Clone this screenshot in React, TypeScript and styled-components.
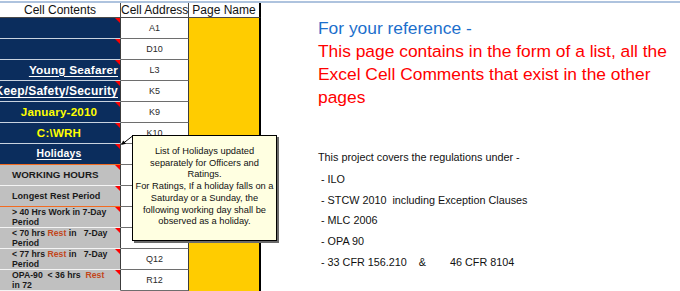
import React from 'react'
import styled, { createGlobalStyle } from 'styled-components'

type Tone = 'white' | 'yellow' | 'dark'
type Rule = 'light' | 'white' | 'orange'

type ContentRow = {
  fill: 'navy' | 'gray'
  rule: Rule
  text?: React.ReactNode
  tone?: Tone
  link?: boolean
  align?: 'left' | 'center' | 'right'
  size?: number
  twoLine?: boolean
}

const GlobalStyle = createGlobalStyle`
  html, body {
    margin: 0;
    padding: 0;
    background: #fff;
  }
  body {
    font-family: "Liberation Sans", Arial, sans-serif;
    width: 680px;
    height: 291px;
    overflow: hidden;
  }
`

const Page = styled.div`
  width: 680px;
  height: 291px;
  overflow: hidden;
  padding-top: 1px;
  box-sizing: border-box;
`

const TopRule = styled.div`
  height: 2px;
  background: #aec3de;
`

const Main = styled.div`
  position: relative;
  display: flex;
`

const Sheet = styled.div`
  display: grid;
  grid-template-columns: 121px 68px 72px;
  grid-auto-rows: 21px;
  grid-template-rows: 15px;
  width: 261px;
  flex: none;
`

const HeadCell = styled.div<{ $last?: boolean }>`
  box-sizing: border-box;
  border-bottom: 1px solid #4a4a4a;
  border-right: ${(p) => (p.$last ? '2px solid #000' : '1px solid #4a4a4a')};
  font-size: 12px;
  line-height: 14px;
  color: #111;
  text-align: center;
  white-space: nowrap;
  overflow: hidden;
`

const ContentCell = styled.div<{
  $fill: 'navy' | 'gray'
  $rule: Rule
  $tone: Tone
  $align: 'left' | 'center' | 'right'
  $size: number
  $twoLine?: boolean
}>`
  position: relative;
  box-sizing: border-box;
  background: ${(p) => (p.$fill === 'navy' ? '#0b2d5d' : '#c0c0c0')};
  border-right: 1px solid #3c3c3c;
  border-bottom: 1px solid
    ${(p) => (p.$rule === 'orange' ? '#f26b21' : p.$rule === 'white' ? '#f4f4f4' : '#c9d3df')};
  color: ${(p) => (p.$tone === 'yellow' ? '#ffff00' : p.$tone === 'white' ? '#fff' : '#1a1a1a')};
  font-weight: 700;
  font-size: ${(p) => p.$size}px;
  letter-spacing: ${(p) => (p.$fill === 'navy' ? '0.2px' : '0')};
  line-height: ${(p) => (p.$twoLine ? '10px' : '20px')};
  padding: ${(p) => (p.$twoLine ? '0 0 0 12px' : p.$align === 'left' ? '0 0 0 12px' : '0 2px 0 0')};
  text-align: ${(p) => p.$align};
  white-space: pre;
  overflow: hidden;
  display: flex;
  flex-direction: column;
  justify-content: center;
  align-items: ${(p) => (p.$align === 'right' ? 'flex-end' : p.$align === 'center' ? 'center' : 'flex-start')};

  &::after {
    content: '';
    position: absolute;
    top: 0;
    right: 0;
    border-top: 5px solid #ff0000;
    border-left: 5px solid transparent;
  }
`

const Link = styled.span`
  text-decoration: underline;
  text-underline-offset: 2px;
`

const Rest = styled.span`
  color: #c2461a;
`

const AddressCell = styled.div`
  box-sizing: border-box;
  background: #fff;
  border-right: 1px solid #3c3c3c;
  border-bottom: 1px solid #6e6e6e;
  font-size: 9px;
  line-height: 20px;
  color: #2a2a2a;
  text-align: center;
`

const PageNameCell = styled.div`
  box-sizing: border-box;
  background: #ffcc00;
  border-right: 2px solid #000;
`

const Notes = styled.div`
  padding: 14px 0 0 57px;
  flex: 1;
`

const Lead = styled.div<{ $tone: 'blue' | 'red' }>`
  font-size: 17.4px;
  line-height: 23px;
  color: ${(p) => (p.$tone === 'blue' ? '#1c6fcc' : '#ff0000')};
  white-space: nowrap;
`

const Scope = styled.div`
  margin-top: 37px;
  font-size: 10.8px;
  color: #111;
`

const ScopeIntro = styled.div`
  line-height: 23px;
`

const ScopeItem = styled.div`
  line-height: 20.7px;
  white-space: pre;
`

const Comment = styled.div`
  position: absolute;
  left: 132px;
  top: 132px;
  width: 145px;
  height: 106px;
  box-sizing: border-box;
  background: #ffffe1;
  border: 1px solid #000;
  box-shadow: 2px 2px 0 #6a6a6a;
  padding-top: 10px;
  font-size: 9.3px;
  line-height: 11.7px;
  color: #111;
  text-align: center;
  white-space: nowrap;
`

const Pointer = styled.svg`
  position: absolute;
  left: 118px;
  top: 130px;
`

const rows: ContentRow[] = [
  { fill: 'navy', rule: 'light' },
  { fill: 'navy', rule: 'light' },
  { fill: 'navy', rule: 'light', text: 'Young Seafarer', tone: 'white', link: true, align: 'right', size: 11.8 },
  { fill: 'navy', rule: 'light', text: 'Keep/Safety/Security', tone: 'white', link: true, align: 'right', size: 12 },
  { fill: 'navy', rule: 'light', text: 'January-2010', tone: 'yellow', align: 'center', size: 11.6 },
  { fill: 'navy', rule: 'light', text: 'C:\\WRH', tone: 'yellow', align: 'center', size: 11.6 },
  { fill: 'navy', rule: 'orange', text: 'Holidays', tone: 'white', link: true, align: 'center', size: 10.4 },
  { fill: 'gray', rule: 'white', text: 'WORKING HOURS', align: 'left', size: 9.8 },
  { fill: 'gray', rule: 'orange', text: 'Longest Rest Period', align: 'left', size: 9.1 },
  {
    fill: 'gray',
    rule: 'white',
    twoLine: true,
    size: 8.7,
    text: (
      <>
        <span>{'> 40 Hrs Work in 7-Day'}</span>
        <span>Period</span>
      </>
    ),
  },
  {
    fill: 'gray',
    rule: 'white',
    twoLine: true,
    size: 8.7,
    text: (
      <>
        <span>
          {'< 70 hrs '}
          <Rest>Rest</Rest>
          {' in   7-Day'}
        </span>
        <span>Period</span>
      </>
    ),
  },
  {
    fill: 'gray',
    rule: 'white',
    twoLine: true,
    size: 8.7,
    text: (
      <>
        <span>
          {'< 77 hrs '}
          <Rest>Rest</Rest>
          {' in   7-Day'}
        </span>
        <span>Period</span>
      </>
    ),
  },
  {
    fill: 'gray',
    rule: 'white',
    twoLine: true,
    size: 8.7,
    text: (
      <>
        <span>
          {'OPA-90  < 36 hrs  '}
          <Rest>Rest</Rest>
        </span>
        <span>in 72</span>
      </>
    ),
  },
]

const addresses = ['A1', 'D10', 'L3', 'K5', 'K9', 'K10', '', '', '', '', '', 'Q12', 'R12']

const regulations = [' - ILO', ' - STCW 2010  including Exception Clauses', ' - MLC 2006', ' - OPA 90', ' - 33 CFR 156.210    &        46 CFR 8104']

export default function App() {
  return (
    <>
      <GlobalStyle />
      <Page>
        <TopRule />
        <Main>
          <Sheet>
            <HeadCell>Cell Contents</HeadCell>
            <HeadCell>Cell Address</HeadCell>
            <HeadCell $last>Page Name</HeadCell>
            {rows.map((row, i) => (
              <React.Fragment key={i}>
                <ContentCell
                  $fill={row.fill}
                  $rule={row.rule}
                  $tone={row.tone ?? 'dark'}
                  $align={row.align ?? 'left'}
                  $size={row.size ?? 9}
                  $twoLine={row.twoLine}
                >
                  {row.link ? <Link>{row.text}</Link> : row.text}
                </ContentCell>
                <AddressCell>{addresses[i]}</AddressCell>
                <PageNameCell />
              </React.Fragment>
            ))}
          </Sheet>

          <Notes>
            <Lead $tone="blue">For your reference -</Lead>
            <Lead $tone="red">This page contains in the form of a list, all the</Lead>
            <Lead $tone="red">Excel Cell Comments that exist in the other</Lead>
            <Lead $tone="red">pages</Lead>
            <Scope>
              <ScopeIntro>This project covers the regulations under -</ScopeIntro>
              {regulations.map((r) => (
                <ScopeItem key={r}>{r}</ScopeItem>
              ))}
            </Scope>
          </Notes>

          <Pointer width="18" height="16" viewBox="0 0 18 16">
            <line x1="14.5" y1="3" x2="5" y2="10.5" stroke="#000" strokeWidth="1" />
            <polygon points="3,12 5.2,7.6 8,10.8" fill="#000" />
          </Pointer>
          <Comment>
            List of Holidays updated
            <br />
            separately for Officers and
            <br />
            Ratings.
            <br />
            For Ratings, If a holiday falls on a
            <br />
            Saturday or a Sunday, the
            <br />
            following working day shall be
            <br />
            observed as a holiday.
          </Comment>
        </Main>
      </Page>
    </>
  )
}
